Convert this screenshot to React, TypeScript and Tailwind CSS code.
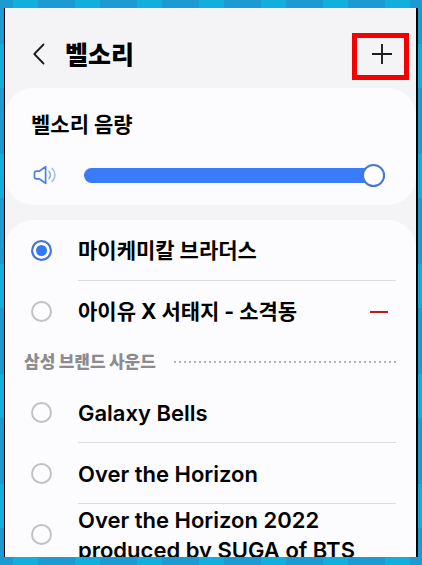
import React, { useState } from 'react';

interface Ringtone {
    id: string;
    title: string;
    removable?: boolean;
}

const myRingtones: Ringtone[] = [
    { id: 'brothers', title: '마이케미칼 브라더스' },
    { id: 'sogyeokdong', title: '아이유 X 서태지 - 소격동', removable: true },
];

const brandRingtones: Ringtone[] = [
    { id: 'galaxy-bells', title: 'Galaxy Bells' },
    { id: 'horizon', title: 'Over the Horizon' },
    { id: 'horizon-2022', title: 'Over the Horizon 2022 produced by SUGA of BTS' },
];

const MAX_VOLUME = 15;

const BackIcon = () => (
    <svg viewBox="0 0 12 22" className="h-[22px] w-3" fill="none" stroke="#1c1c1e" strokeWidth="1.8">
        <path d="M10.5 1.5 1.3 11l9.2 9.5" strokeLinecap="round" strokeLinejoin="round" />
    </svg>
);

const PlusIcon = () => (
    <svg viewBox="0 0 20 20" className="size-5" fill="none" stroke="#1c1c1e" strokeWidth="1.9">
        <path d="M10 0v20M0 10h20" />
    </svg>
);

const SpeakerIcon = () => (
    <svg viewBox="0 0 24 20" className="h-5 w-6 shrink-0" fill="none" strokeLinecap="round" strokeLinejoin="round">
        <path d="M3.2 6.2h3L12.6 1.6v16.8L6.2 13.8h-3a1.7 1.7 0 0 1-1.7-1.7V7.9a1.7 1.7 0 0 1 1.7-1.7z" stroke="#4a80dc" strokeWidth="1.7" />
        <path d="M16 6.5c1.6 2 1.6 5 0 7" stroke="#8fb2ea" strokeWidth="1.7" />
        <path d="M19.2 3.5c3.6 4 3.6 9 0 13" stroke="#a3bfed" strokeWidth="1.7" />
    </svg>
);

interface RowProps {
    tone: Ringtone;
    selected: boolean;
    onSelect: (id: string) => void;
    textClass: string;
}

const RingtoneRow = ({ tone, selected, onSelect, textClass }: RowProps) => (
    <li className="group flex items-center pr-5 pl-[26px]">
        <input
            type="radio"
            name="ringtone"
            id={tone.id}
            checked={selected}
            onChange={() => onSelect(tone.id)}
            className="size-[21px] shrink-0 appearance-none rounded-full border-2 border-[#c2c2c4] bg-[#fcfcfe] checked:border-[#4076dc] checked:bg-[#3478f6] checked:shadow-[inset_0_0_0_3px_#fff]"
        />
        <div className="ml-[26px] flex h-[61px] min-w-0 flex-1 items-center border-b border-[#dcdce0] pt-px group-last:border-b-0">
            <label htmlFor={tone.id} className={`flex-1 text-black ${textClass}`}>
                {tone.title}
            </label>
            {tone.removable && (
                <button type="button" aria-label="삭제" className="mr-2 flex h-8 w-[18px] items-center">
                    <span className="h-[2px] w-full bg-[#c4141c]" />
                </button>
            )}
        </div>
    </li>
);

const StripedEdge = () => (
    <div className="h-2 shrink-0 bg-[repeating-linear-gradient(90deg,#1c9bd2_0_13px,#12aedd_13px_38px,#1c9bd2_38px_62px)]" />
);

const App = () => {
    const [selected, setSelected] = useState('brothers');
    const [volume, setVolume] = useState(MAX_VOLUME);
    const percent = (volume / MAX_VOLUME) * 100;

    return (
        <div className="flex h-screen flex-col overflow-hidden bg-[repeating-linear-gradient(180deg,#1c9bd2_0_44px,#12aedd_44px_88px,#1c9bd2_88px_110px)] font-['Inter','Noto_Sans_CJK_KR',sans-serif]">
            <StripedEdge />
            <main className="mx-1 min-h-0 flex-1 overflow-hidden border-r-2 border-l border-black bg-[#f4f4f7]">
                <header className="flex h-20 items-center pt-3 pr-[7px] pl-7">
                    <a href="#back" aria-label="뒤로" className="shrink-0">
                        <BackIcon />
                    </a>
                    <h1 className="ml-5 flex-1 pt-px text-[25px] leading-8 font-black text-black">벨소리</h1>
                    <button
                        type="button"
                        aria-label="추가"
                        className="mt-1 flex h-[47px] w-[57px] items-center justify-center border-[5px] border-[#f40000] pb-1 pl-[2px]"
                    >
                        <PlusIcon />
                    </button>
                </header>

                <section className="rounded-[28px] bg-[#fcfcfe] pt-[21px] pr-[31px] pb-5 pl-[26px]">
                    <label htmlFor="volume" className="block text-[21px] leading-8 font-bold text-black">
                        벨소리 음량
                    </label>
                    <div className="mt-6 flex items-center pl-[2px]">
                        <SpeakerIcon />
                        <input
                            id="volume"
                            type="range"
                            min={0}
                            max={MAX_VOLUME}
                            value={volume}
                            onChange={(e) => setVolume(Number(e.target.value))}
                            style={{ backgroundImage: `linear-gradient(90deg, #3a7bfa ${percent}%, #d9e4fb ${percent}%)` }}
                            className="ml-[27px] h-[15px] min-w-0 flex-1 appearance-none rounded-full [&::-webkit-slider-runnable-track]:h-[15px] [&::-webkit-slider-thumb]:-mt-1 [&::-webkit-slider-thumb]:size-[23px] [&::-webkit-slider-thumb]:appearance-none [&::-webkit-slider-thumb]:rounded-full [&::-webkit-slider-thumb]:border-2 [&::-webkit-slider-thumb]:border-solid [&::-webkit-slider-thumb]:border-[#4a76d8] [&::-webkit-slider-thumb]:bg-white"
                        />
                    </div>
                </section>

                <section className="mt-[15px] rounded-t-[28px] bg-[#fcfcfe]">
                    <ul>
                        {myRingtones.map((tone) => (
                            <RingtoneRow
                                key={tone.id}
                                tone={tone}
                                selected={selected === tone.id}
                                onSelect={setSelected}
                                textClass="text-[21px] leading-[30px] font-bold"
                            />
                        ))}
                    </ul>
                    <div className="flex h-10 items-center pr-5 pl-[19px]">
                        <h2 className="text-[17px] leading-6 font-black text-[#8c8c90]">삼성 브랜드 사운드</h2>
                        <span className="ml-[18px] h-[2px] flex-1 bg-[repeating-linear-gradient(90deg,#b4b4b8_0_2px,transparent_2px_5px)]" />
                    </div>
                    <ul>
                        {brandRingtones.map((tone) => (
                            <RingtoneRow
                                key={tone.id}
                                tone={tone}
                                selected={selected === tone.id}
                                onSelect={setSelected}
                                textClass="text-[22px] leading-[30px] font-semibold"
                            />
                        ))}
                    </ul>
                </section>
            </main>
            <StripedEdge />
        </div>
    );
};

export default App;
